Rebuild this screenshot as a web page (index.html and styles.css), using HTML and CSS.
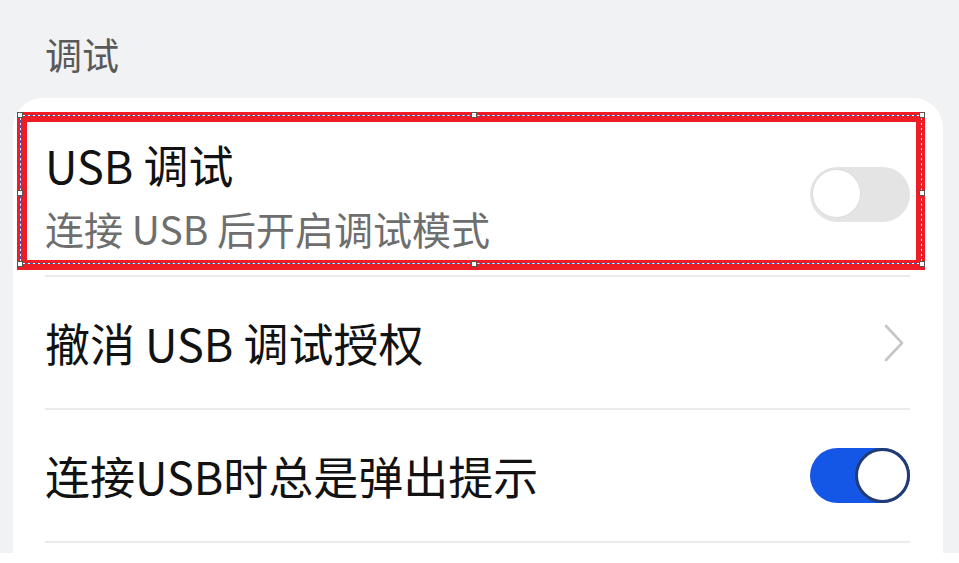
FILE: index.html
```html
<!DOCTYPE html>
<html lang="zh-CN">
<head>
    <meta charset="UTF-8">
    <meta name="viewport" content="width=device-width, initial-scale=1.0">
    <title>调试</title>
    <link rel="stylesheet" href="styles.css">
</head>
<body>

    <div class="page">
        <!-- Section heading -->
        <div class="section-title">调试</div>

        <!-- Settings card -->
        <div class="card">

            <div class="row row-first">
                <div class="row-text">
                    <div class="row-title">USB 调试</div>
                    <div class="row-sub">连接 USB 后开启调试模式</div>
                </div>
                <div class="switch"><span class="knob"></span></div>

                <!-- Annotation frame drawn over the first row -->
                <div class="mark">
                    <div class="mark-line">
                        <span class="handle h-tl"></span>
                        <span class="handle h-tm"></span>
                        <span class="handle h-tr"></span>
                        <span class="handle h-ml"></span>
                        <span class="handle h-mr"></span>
                        <span class="handle h-bl"></span>
                        <span class="handle h-bm"></span>
                        <span class="handle h-br"></span>
                    </div>
                </div>
            </div>

            <div class="row">
                <div class="row-title">撤消 USB 调试授权</div>
                <svg class="chevron" width="22" height="40" viewBox="0 0 22 40">
                    <path d="M3 3 L19 20 L3 37" fill="none" stroke="#c6c6c6" stroke-width="2.6" stroke-linecap="round" stroke-linejoin="round"/>
                </svg>
            </div>

            <div class="row">
                <div class="row-title">连接USB时总是弹出提示</div>
                <div class="switch on"><span class="knob"></span></div>
            </div>

        </div>
    </div>

</body>
</html>
```

FILE: styles.css
```css
/* Page */
body {
    margin: 0;
    background: #ffffff;
    font-family: "Noto Sans CJK SC", "Noto Sans", sans-serif;
}

.page {
    height: 553px;
    overflow: hidden;
    background: #f1f2f4;
}

/* Section heading */
.section-title {
    padding: 29px 0 0 45px;
    height: 98px;
    box-sizing: border-box;
    font-size: 37px;
    line-height: 50px;
    color: #595959;
}

/* Card */
.card {
    margin: 0 16px 0 13px;
    padding: 20px 33px 0 32px;
    background: #ffffff;
    border-radius: 30px 30px 0 0;
    height: 600px;
}

.row {
    display: flex;
    align-items: center;
    justify-content: space-between;
    height: 131px;
    border-bottom: 2px solid #ebebeb;
}

.row-first {
    position: relative;
    height: auto;
    padding: 19px 0 22px;
}

.row-title {
    font-size: 45px;
    line-height: 56px;
    color: #121212;
}

.row-sub {
    margin-top: 10px;
    font-size: 39px;
    line-height: 50px;
    color: #6e6e6e;
}

.chevron {
    margin-right: 5px;
}

/* Switches */
.switch {
    position: relative;
    flex-shrink: 0;
    width: 100px;
    height: 55px;
    border-radius: 28px;
    background: #e4e4e4;
}

.row-first .switch {
    margin-bottom: 2px;
}

.switch .knob {
    position: absolute;
    left: 3px;
    top: 3px;
    width: 47px;
    height: 47px;
    border-radius: 50%;
    background: #ffffff;
    box-shadow: 0 0 0 1px #dddddd;
}

.switch.on {
    background: #1457e6;
}

.switch.on .knob {
    left: auto;
    right: 0;
    top: 0;
    width: 49px;
    height: 49px;
    border: 3px solid #233b73;
    box-shadow: none;
}

/* Red annotation frame over the first row */
.mark {
    position: absolute;
    left: -28px;
    top: -6px;
    width: 908px;
    height: 158px;
    box-sizing: border-box;
    border: 10px solid #ee1c25;
    border-right-width: 9px;
}

.mark-line {
    position: absolute;
    left: -7px;
    top: -7px;
    right: -6px;
    bottom: -4px;
    border: 1px solid #ffffff;
}

.mark-line::before {
    content: "";
    position: absolute;
    inset: -1px;
    border: 1px dashed #2f5fc9;
}

.handle {
    position: absolute;
    z-index: 1;
    width: 4px;
    height: 4px;
    background: #ffffff;
    border: 1px solid #555555;
}

.h-tl { left: -4px; top: -4px; }
.h-tm { left: 50%; top: -4px; }
.h-tr { right: -4px; top: -4px; }
.h-ml { left: -4px; top: 50%; }
.h-mr { right: -4px; top: 50%; }
.h-bl { left: -4px; bottom: -4px; }
.h-bm { left: 50%; bottom: -4px; }
.h-br { right: -4px; bottom: -4px; }
```
